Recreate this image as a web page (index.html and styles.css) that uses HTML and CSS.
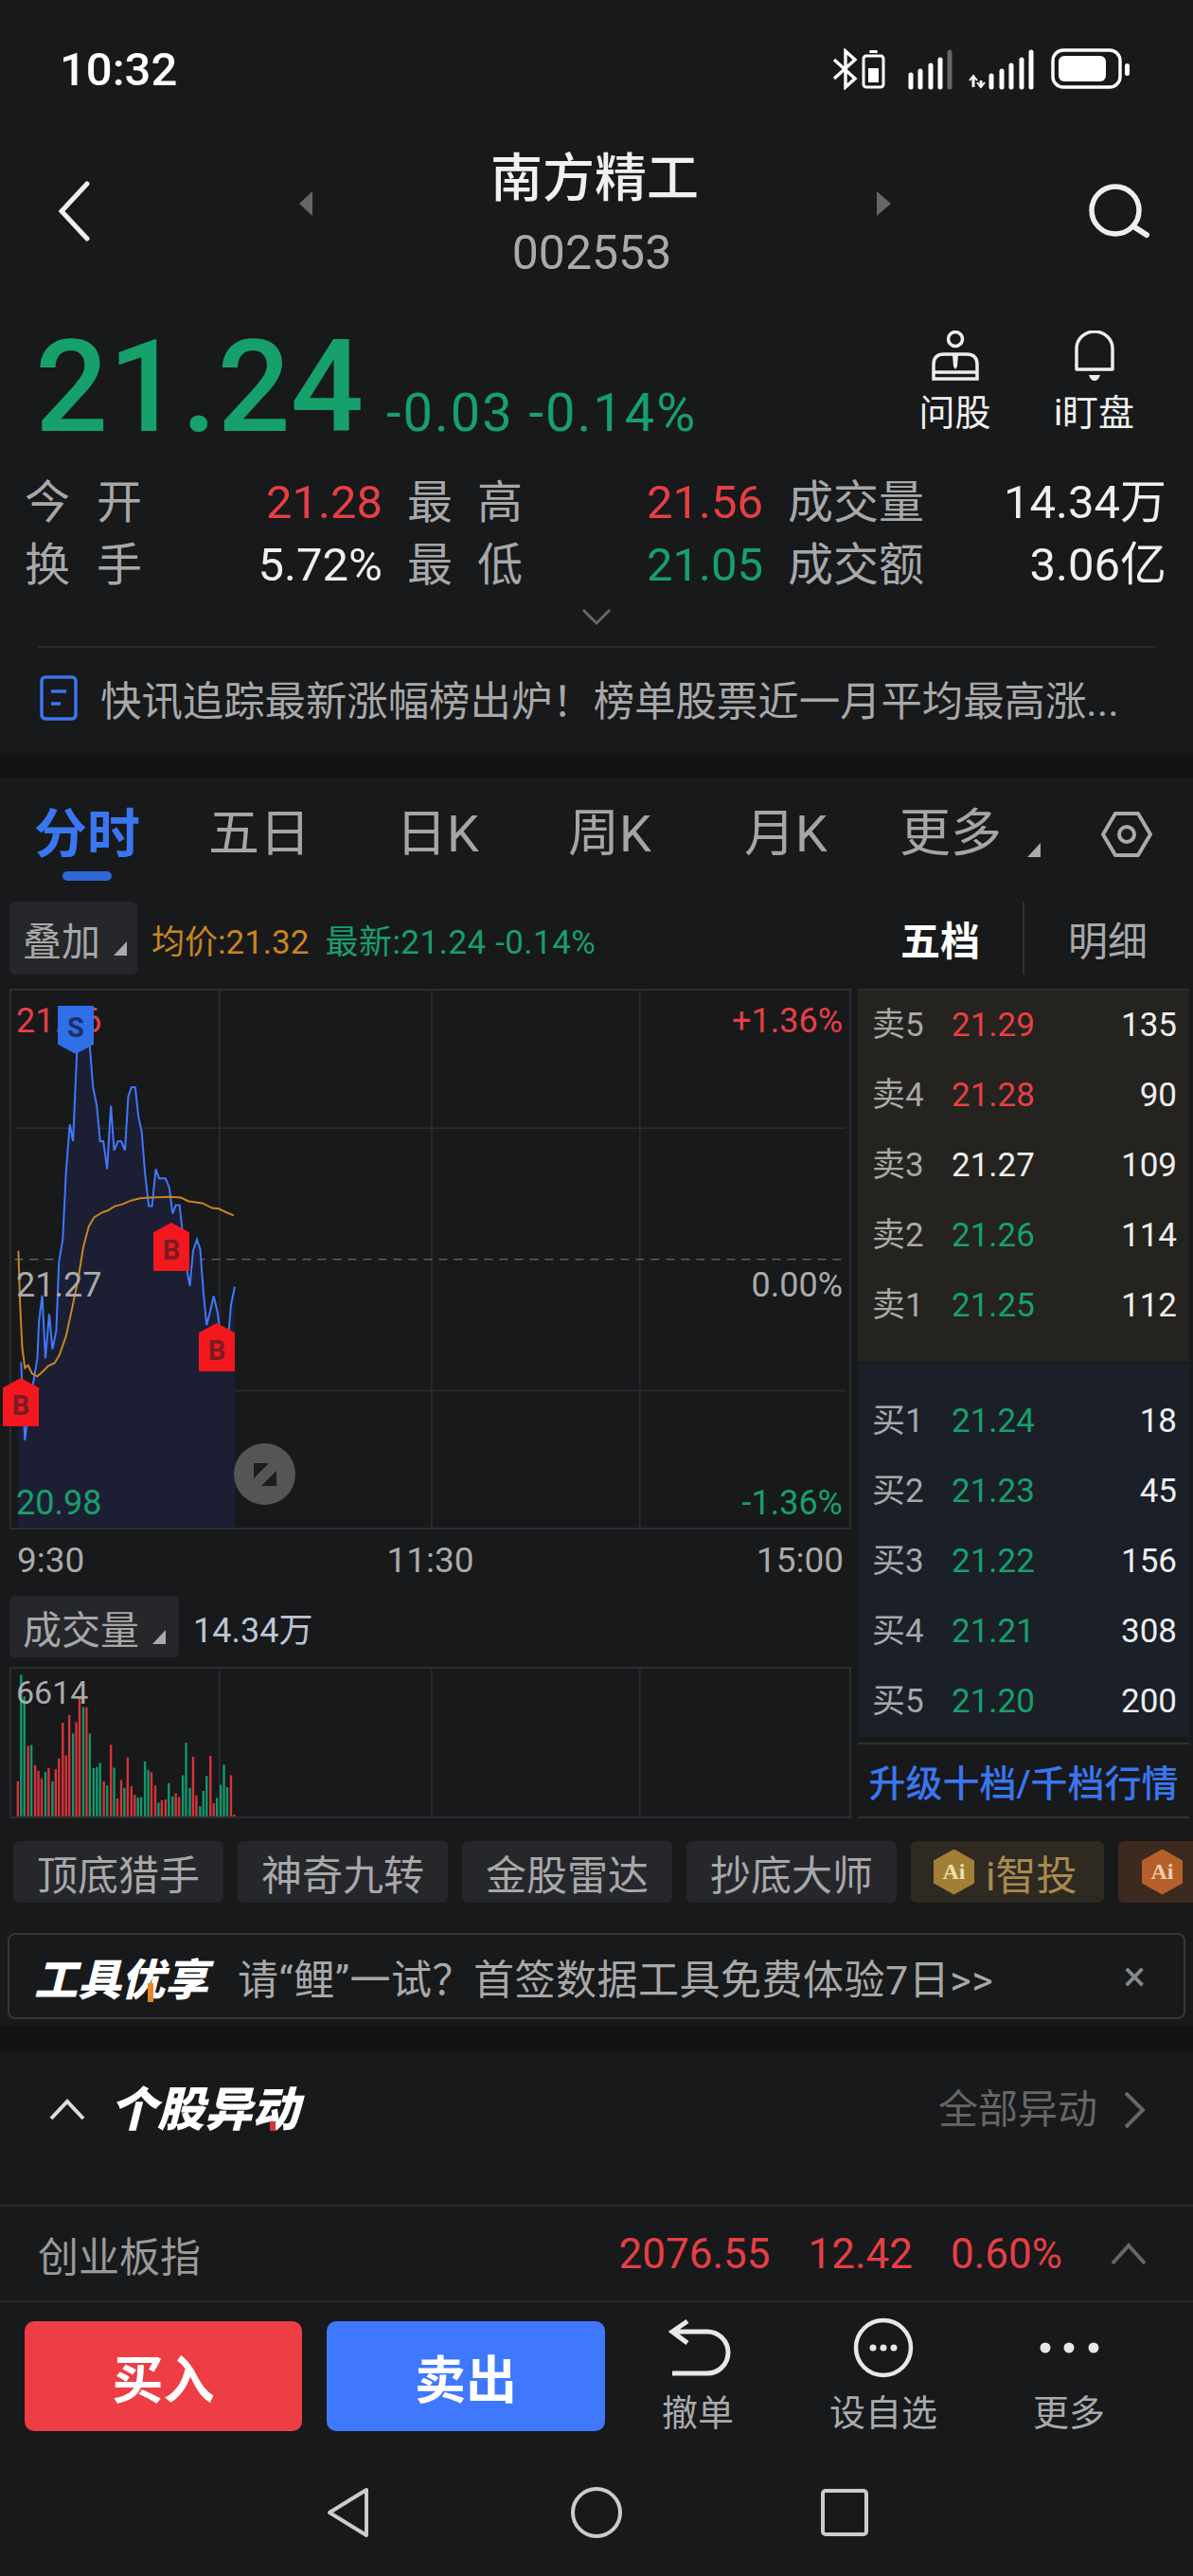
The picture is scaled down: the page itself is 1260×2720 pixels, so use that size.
FILE: index.html
```html
<!DOCTYPE html>
<html lang="zh">
<head>
    <meta charset="UTF-8">
    <meta name="viewport" content="width=device-width, initial-scale=1.0">
    <title>南方精工</title>
    <link rel="stylesheet" href="styles.css">
</head>
<body>
    <div class="status">
        <div class="time">10:32</div>
        <svg class="status_icons" viewBox="870 50 340 44" width="340" height="44">
            <path d="M881 62 L903 82 L893 91 V53 L903 62 L881 82" fill="none" stroke="#fff" stroke-width="3.4"/>
            <rect x="918" y="52" width="9" height="3" rx="1.5" fill="#fff"/>
            <rect x="912" y="58" width="21" height="33" rx="3" fill="none" stroke="#fff" stroke-width="3"/>
            <rect x="917" y="71" width="11" height="15" fill="#fff"/>
            <path d="M962 78V91M972 74V91M983 68V91M993 62V91" stroke="#fff" stroke-width="5" stroke-linecap="round"/>
            <path d="M1003 54V91" stroke="#666" stroke-width="5" stroke-linecap="round"/>
            <path d="M1028 81V91M1036 84V91" stroke="#fff" stroke-width="3"/>
            <path d="M1024 84l4-5 4 5M1032 86l4 5 4-5" fill="none" stroke="#fff" stroke-width="2"/>
            <path d="M1047 79V91M1058 74V91M1068 68V91M1079 62V91M1089 54V91" stroke="#fff" stroke-width="5" stroke-linecap="round"/>
            <rect x="1112" y="52" width="71" height="39" rx="11" fill="none" stroke="#fff" stroke-width="3.4"/>
            <rect x="1118" y="58" width="50" height="27" rx="6" fill="#fff"/>
            <rect x="1188" y="66" width="5" height="13" rx="2.5" fill="#fff"/>
        </svg>
    </div>

    <div class="header">
        <svg class="back" viewBox="0 0 36 64" width="36" height="64"><path d="M32 3 L5 32 L32 61" fill="none" stroke="#eee" stroke-width="5" stroke-linecap="round"/></svg>
        <div class="tri_left"></div>
        <div class="title_box">
            <div class="title">南方精工</div>
            <div class="code">002553</div>
        </div>
        <div class="tri_right"></div>
        <svg class="search" viewBox="0 0 66 60" width="66" height="60"><circle cx="29" cy="29" r="25" fill="none" stroke="#eee" stroke-width="5.5"/><path d="M48 46 L62 55" stroke="#eee" stroke-width="6" stroke-linecap="round"/></svg>
    </div>

    <div class="price_row">
        <div class="price">21.24</div>
        <div class="change">-0.03 -0.14%</div>
        <div class="quick">
            <div class="quick_item">
                <svg viewBox="0 0 52 54" width="52" height="54"><circle cx="26" cy="9" r="7.5" fill="none" stroke="#eee" stroke-width="3.5"/><path d="M3 51 V36 Q3 25 14 25 H38 Q49 25 49 36 V51 Z M3 44 H49" fill="none" stroke="#eee" stroke-width="3.5"/><path d="M23 26 H29 L28 38 L26 41 L24 38 Z" fill="#eee"/></svg>
                <span>问股</span>
            </div>
            <div class="quick_item">
                <svg viewBox="0 0 52 54" width="52" height="54"><path d="M7 41 V19 A19 18 0 0 1 45 19 V41 Z" fill="none" stroke="#eee" stroke-width="3.5" stroke-linejoin="round"/><path d="M20 47 H32 Q30 53 26 53 Q22 53 20 47 Z" fill="#eee"/></svg>
                <span>i盯盘</span>
            </div>
        </div>
    </div>

    <div class="stats">
        <div class="label pair"><span>今</span><span>开</span></div><div class="value red">21.28</div>
        <div class="label pair indent"><span>最</span><span>高</span></div><div class="value red">21.56</div>
        <div class="label indent">成交量</div><div class="value">14.34万</div>
        <div class="label pair"><span>换</span><span>手</span></div><div class="value">5.72%</div>
        <div class="label pair indent"><span>最</span><span>低</span></div><div class="value green">21.05</div>
        <div class="label indent">成交额</div><div class="value">3.06亿</div>
    </div>

    <div class="more_row">
        <svg viewBox="0 0 32 18" width="32" height="18"><path d="M2 2 L16 16 L30 2" fill="none" stroke="#666" stroke-width="3"/></svg>
    </div>

    <div class="news">
        <svg viewBox="0 0 40 48" width="40" height="48"><rect x="2" y="2" width="36" height="44" rx="4" fill="none" stroke="#3a76f0" stroke-width="3.5"/><path d="M12 17 H28 M12 30 H22" stroke="#3a76f0" stroke-width="3.5"/></svg>
        <span>快讯追踪最新涨幅榜出炉！榜单股票近一月平均最高涨...</span>
    </div>

    <div class="band"></div>

    <div class="tabs">
        <div class="tab active">分时</div>
        <div class="tab">五日</div>
        <div class="tab">日K</div>
        <div class="tab">周K</div>
        <div class="tab">月K</div>
        <div class="tab tab_more">更多<i class="corner"></i></div>
        <svg viewBox="0 0 54 50" width="54" height="50"><path d="M15 3 H39 L52 25 L39 47 H15 L2 25 Z" fill="none" stroke="#aaa" stroke-width="4" stroke-linejoin="round"/><circle cx="27" cy="25" r="8" fill="none" stroke="#aaa" stroke-width="4"/></svg>
    </div>

    <div class="toolbar">
        <div class="pick">叠加<i class="corner"></i></div>
        <div class="avg">均价:21.32</div>
        <div class="latest">最新:21.24 -0.14%</div>
        <div class="book_tabs">
            <div class="book_tab on">五档</div>
            <div class="book_tab">明细</div>
        </div>
    </div>

    <div class="main">
        <div class="charts">
            <div class="chart">
                <svg viewBox="17 60 1549 1445" preserveAspectRatio="none">
                    <path class="fine" d="M402 60V1505M794 60V1505M1179 60V1505M23 430H1560M23 1137H1560"/>
                    <path class="dash" d="M23 783H1560"/>
                    <path fill="#1c1f33" d="M30 1505V1050L35 1060 42 1270 50 1180 65 1050 68 950 74 880 80 1050 87 930 93 1025 100 975 105 790 112 730 118 550 125 420 131 465 138 230 145 130 155 130 162 210 168 320 175 370 181 465 187 465 194 540 201 370 207 490 214 465 220 465 227 490 233 345 239 320 246 320 252 400 258 440 264 550 271 640 277 640 284 540 290 565 302 565 309 590 315 660 321 637 328 637 334 720 340 800 347 855 353 760 360 730 366 755 372 870 378 960 385 920 391 882 398 925 404 990 416 1030 423 905 430 857V1505Z"/>
                    <path class="blue_line" d="M35 1060 42 1270 50 1180 65 1050 68 950 74 880 80 1050 87 930 93 1025 100 975 105 790 112 730 118 550 125 420 131 465 138 230 145 130 155 130 162 210 168 320 175 370 181 465 187 465 194 540 201 370 207 490 214 465 220 465 227 490 233 345 239 320 246 320 252 400 258 440 264 550 271 640 277 640 284 540 290 565 302 565 309 590 315 660 321 637 328 637 334 720 340 800 347 855 353 760 360 730 366 755 372 870 378 960 385 920 391 882 398 925 404 990 416 1030 423 905 430 857"/>
                    <path class="avg_line" d="M30 760 33 900 37 1020 42 1075 48 1068 55 1090 65 1098 75 1085 85 1070 97 1062 106 1040 118 990 130 910 140 840 150 750 160 695 170 670 185 657 195 652 208 640 222 635 238 625 255 619 275 617 310 615 330 617 345 627 370 632 388 645 400 647 415 657 428 665"/>
                </svg>
                <div class="tag_l red t1">21.56</div>
                <div class="tag_r red t1">+1.36%</div>
                <div class="tag_l t2">21.27</div>
                <div class="tag_r t2">0.00%</div>
                <div class="tag_l green t3">20.98</div>
                <div class="tag_r green t3">-1.36%</div>
                <div class="mark sell" style="left:49px;top:16px">S</div>
                <div class="mark buy" style="left:150px;top:245px">B</div>
                <div class="mark buy" style="left:198px;top:351px">B</div>
                <div class="mark buy" style="left:-9px;top:409px">B</div>
                <div class="mini">
                    <svg viewBox="0 0 30 30" width="30" height="30"><path d="M3 3 H19 L3 19 Z M27 27 H11 L27 11 Z" fill="#1c1d1f"/></svg>
                </div>
            </div>
            <div class="axis"><span>9:30</span><span>11:30</span><span class="axis_end">15:00</span></div>
            <div class="vol_head">
                <div class="pick small">成交量<i class="corner"></i></div>
                <div class="vol_num">14.34万</div>
            </div>
            <div class="chart vol">
                <svg viewBox="17 360 1549 478" preserveAspectRatio="none">
                    <path class="fine" d="M402 360V838M794 360V838M1179 360V838"/>
                    <path class="bar_r" d="M29 725V838M48 610V838M61 672V838M67 690V838M73 715V838M86 682V838M99 685V838M105 650V838M112 535V838M118 640V838M124 510V838M137 533V838M143 455V838M156 485V838M188 725V838M201 606V838M213 780V838M220 720V838M232 647V838M239 740V838M245 768V838M276 695V838M283 738V838M295 785V838M302 783V838M321 763V838M327 775V838M353 645V838M359 770V838M385 642V838M391 795V838M423 705V838M429 832V838"/>
                    <path class="bar_g" d="M35 380V838M41 450V838M54 607V838M80 695V838M93 725V838M131 570V838M150 483V838M162 570V838M169 682V838M175 678V838M181 665V838M194 738V838M207 680V838M226 745V838M251 777V838M257 775V838M264 660V838M270 687V838M289 793V838M308 730V838M315 773V838M334 705V838M340 600V838M347 745V838M366 805V838M372 755V838M378 707V838M397 778V838M404 735V838M410 670V838M416 743V838"/>
                </svg>
                <div class="tag_l t4">6614</div>
            </div>
        </div>

        <div class="book">
            <div class="side ask">
                <div class="level"><span class="lv">卖5</span><span class="red">21.29</span><span class="qty">135</span></div>
                <div class="level"><span class="lv">卖4</span><span class="red">21.28</span><span class="qty">90</span></div>
                <div class="level"><span class="lv">卖3</span><span class="white">21.27</span><span class="qty">109</span></div>
                <div class="level"><span class="lv">卖2</span><span class="green">21.26</span><span class="qty">114</span></div>
                <div class="level"><span class="lv">卖1</span><span class="green">21.25</span><span class="qty">112</span></div>
            </div>
            <div class="side bid">
                <div class="level"><span class="lv">买1</span><span class="green">21.24</span><span class="qty">18</span></div>
                <div class="level"><span class="lv">买2</span><span class="green">21.23</span><span class="qty">45</span></div>
                <div class="level"><span class="lv">买3</span><span class="green">21.22</span><span class="qty">156</span></div>
                <div class="level"><span class="lv">买4</span><span class="green">21.21</span><span class="qty">308</span></div>
                <div class="level"><span class="lv">买5</span><span class="green">21.20</span><span class="qty">200</span></div>
            </div>
            <div class="upgrade">升级十档/千档行情</div>
        </div>
    </div>

    <div class="tools">
        <div class="tool">顶底猎手</div>
        <div class="tool">神奇九转</div>
        <div class="tool">金股雷达</div>
        <div class="tool">抄底大师</div>
        <div class="tool ai"><i class="hex">Ai</i>i智投</div>
        <div class="tool ai2"><i class="hex">Ai</i></div>
    </div>

    <div class="banner">
        <div class="banner_logo">工具优享<i class="spark"></i></div>
        <div class="banner_text">请“鲤”一试？首签数据工具免费体验7日&gt;&gt;</div>
        <div class="banner_close">×</div>
    </div>

    <div class="band low"></div>

    <div class="section">
        <svg viewBox="0 0 40 24" width="40" height="24"><path d="M3 21 L20 3 L37 21" fill="none" stroke="#ddd" stroke-width="4"/></svg>
        <div class="section_title">个股异动<i class="spark red_spark"></i></div>
        <div class="section_all">全部异动</div>
        <svg viewBox="0 0 24 40" width="24" height="40"><path d="M3 2 L21 20 L3 38" fill="none" stroke="#666" stroke-width="4"/></svg>
    </div>

    <div class="index_row">
        <div class="index_name">创业板指</div>
        <div class="index_num n1">2076.55</div>
        <div class="index_num n2">12.42</div>
        <div class="index_num n3">0.60%</div>
        <svg viewBox="0 0 40 24" width="40" height="24"><path d="M3 22 L20 3 L37 22" fill="none" stroke="#666" stroke-width="4"/></svg>
    </div>

    <div class="trade">
        <div class="trade_btn buy_btn">买入</div>
        <div class="trade_btn sell_btn">卖出</div>
        <div class="trade_item">
            <svg viewBox="0 0 72 64" width="72" height="64"><path d="M25 4 L9 15 L25 27 M9 15 H46 A22 22 0 0 1 46 59 H9" fill="none" stroke="#e8e8e8" stroke-width="5"/></svg>
            <span>撤单</span>
        </div>
        <div class="trade_item">
            <svg viewBox="0 0 72 64" width="72" height="64"><circle cx="36" cy="32" r="29" fill="none" stroke="#e8e8e8" stroke-width="4.5"/><circle cx="25" cy="32" r="3.5" fill="#e8e8e8"/><circle cx="36" cy="32" r="3.5" fill="#e8e8e8"/><circle cx="47" cy="32" r="3.5" fill="#e8e8e8"/></svg>
            <span>设自选</span>
        </div>
        <div class="trade_item">
            <svg viewBox="0 0 72 64" width="72" height="64"><circle cx="11" cy="32" r="5.5" fill="#e8e8e8"/><circle cx="36" cy="32" r="5.5" fill="#e8e8e8"/><circle cx="62" cy="32" r="5.5" fill="#e8e8e8"/></svg>
            <span>更多</span>
        </div>
    </div>

    <div class="nav">
        <svg viewBox="0 0 46 54" width="46" height="54"><path d="M42 3 V51 L3 27 Z" fill="none" stroke="#ccc" stroke-width="4" stroke-linejoin="round"/></svg>
        <svg viewBox="0 0 54 54" width="54" height="54"><circle cx="27" cy="27" r="25" fill="none" stroke="#ccc" stroke-width="4"/></svg>
        <svg viewBox="0 0 50 50" width="50" height="50"><rect x="2" y="2" width="46" height="46" rx="3" fill="none" stroke="#ccc" stroke-width="4"/></svg>
    </div>
</body>
</html>
```

FILE: styles.css
```css
* {
    box-sizing: border-box;
}
body {
    margin: 0;
    width: 1260px;
    height: 2720px;
    overflow: hidden;
    background: #17191b;
    color: #f0f0f0;
    font-family: Roboto, "Noto Sans CJK SC", sans-serif;
}
i {
    font-style: normal;
}
svg {
    display: block;
    flex: none;
}
.red { color: #e63f45; }
.green { color: #16a06c; }
.white { color: #eee; }

/* status bar */
.status {
    height: 146px;
    display: flex;
    align-items: center;
    justify-content: space-between;
    padding: 0 50px 0 63px;
}
.time {
    font-size: 49px;
    font-weight: 500;
    color: #fff;
}

/* header */
.header {
    height: 154px;
    display: grid;
    grid-template-columns: 256px 14px 596px 15px 1fr;
    align-items: center;
    padding: 0 45px 0 60px;
}
.tri_left, .tri_right {
    height: 26px;
    margin-bottom: 16px;
    background: #666;
}
.tri_left { clip-path: polygon(100% 0, 100% 100%, 0 50%); }
.tri_right { clip-path: polygon(0 0, 100% 50%, 0 100%); }
.title_box {
    text-align: center;
    align-self: start;
    padding-top: 12px;
}
.title {
    font-size: 55px;
    line-height: 60px;
    font-weight: 500;
}
.code {
    font-size: 50px;
    line-height: 50px;
    margin-top: 24px;
    color: #aaa;
    margin-right: 6px;
}
.search {
    justify-self: end;
}

/* price */
.price_row {
    display: flex;
    align-items: baseline;
    padding: 41px 31px 0 37px;
    height: 177px;
}
.price {
    font-size: 136px;
    line-height: 136px;
    font-weight: 500;
    color: #16a06c;
}
.change {
    font-size: 56px;
    letter-spacing: 2px;
    margin-left: 24px;
    color: #16a06c;
}
.quick {
    margin-left: auto;
    display: flex;
    align-self: flex-start;
    padding-top: 8px;
}
.quick_item {
    width: 147px;
    display: flex;
    flex-direction: column;
    align-items: center;
    font-size: 38px;
    line-height: 40px;
}
.quick_item span {
    margin-top: 13px;
}

/* stats */
.stats {
    margin-top: 21px;
    padding-left: 26px;
    display: grid;
    grid-template-columns: 124px 254px 148px 254px 171px 255px;
    grid-auto-rows: 66px;
    font-size: 48px;
    line-height: 66px;
    align-items: baseline;
}
.label {
    color: #a8a8a8;
}
.pair {
    display: flex;
    justify-content: space-between;
}
.indent {
    padding-left: 26px;
}
.value {
    text-align: right;
    font-size: 49px;
}
.more_row {
    height: 54px;
    margin: 0 40px;
    padding-top: 12px;
    display: flex;
    justify-content: center;
    align-items: flex-start;
    border-bottom: 2px solid #292b2d;
}
.news {
    height: 111px;
    display: flex;
    align-items: center;
    padding: 0 0 6px 42px;
    font-size: 43.4px;
    color: #a8a8a8;
}
.news span {
    margin-left: 24px;
    white-space: nowrap;
}
.band {
    height: 26px;
    background: #111315;
}

/* tabs */
.tabs {
    height: 118px;
    padding-left: 36px;
    display: grid;
    grid-template-columns: 184px 198px 182px 186px 164px 213px 1fr;
    align-items: center;
    font-size: 54px;
    line-height: 60px;
    padding-top: 2px;
    color: #a5a5a5;
}
.tab {
    position: relative;
    white-space: nowrap;
}
.active {
    color: #3a76f0;
    font-weight: 700;
    font-size: 56px;
}
.active::after {
    content: "";
    position: absolute;
    left: 30px;
    bottom: -19px;
    width: 52px;
    height: 10px;
    border-radius: 5px;
    background: #2f66d6;
}
.tab_more {
    display: flex;
    align-items: flex-end;
}
.corner {
    width: 14px;
    height: 15px;
    background: #aaa;
    clip-path: polygon(100% 0, 100% 100%, 0 100%);
    flex: none;
    margin: 0 0 6px 27px;
}

/* toolbar */
.toolbar {
    height: 105px;
    padding: 13px 0 15px 10px;
    display: flex;
    align-items: center;
}
.pick {
    width: 135px;
    height: 77px;
    display: flex;
    align-items: center;
    padding-left: 14px;
    background: #25272b;
    border-radius: 6px;
    font-size: 41px;
    color: #a8a8a8;
}
.pick .corner {
    margin: 22px 0 0 14px;
}
.avg, .latest {
    font-size: 35px;
    white-space: nowrap;
    padding-top: 2px;
}
.avg {
    color: #c8861e;
    margin-left: 15px;
}
.latest {
    color: #16a06c;
    margin-left: 17px;
    letter-spacing: 0.5px;
}
.book_tabs {
    margin-left: auto;
    display: flex;
    align-self: stretch;
    align-items: center;
    font-size: 42px;
    color: #a8a8a8;
}
.book_tab {
    width: 178px;
    padding-left: 46px;
}
.book_tab.on {
    width: 131px;
    padding-left: 0;
    color: #fff;
    font-weight: 700;
    border-right: 2px solid #2e3033;
    align-self: stretch;
    display: flex;
    align-items: center;
}

/* charts */
.main {
    display: flex;
    gap: 7px;
    padding-left: 10px;
    height: 876px;
}
.charts {
    width: 889px;
}
.chart {
    position: relative;
    height: 571px;
    border: 2px solid #2b2d30;
}
.chart svg {
    width: 100%;
    height: 100%;
}
.chart path {
    vector-effect: non-scaling-stroke;
}
.fine {
    stroke: #2b2d30;
    stroke-width: 1.5;
    fill: none;
}
.dash {
    stroke: #5a5c60;
    stroke-width: 1.5;
    stroke-dasharray: 9 7;
    fill: none;
}
.blue_line {
    stroke: #3f78fd;
    stroke-width: 2;
    fill: none;
}
.avg_line {
    stroke: #c8861e;
    stroke-width: 2;
    fill: none;
}
.bar_r, .bar_g {
    stroke-width: 2.4;
    fill: none;
}
.bar_r { stroke: #d7333a; }
.bar_g { stroke: #13976a; }
.tag_l, .tag_r {
    position: absolute;
    font-size: 36px;
    line-height: 36px;
    color: #aaa;
}
.tag_l.red, .tag_r.red { color: #e63f45; }
.tag_l.green, .tag_r.green { color: #16a06c; }
.tag_l { left: 5px; }
.tag_r { right: 7px; }
.t1 { top: 14px; }
.t2 { top: 293px; }
.t3 { top: 523px; }
.t4 { top: 7px; font-size: 34px; }
.mark {
    position: absolute;
    width: 38px;
    height: 51px;
    display: flex;
    align-items: center;
    justify-content: center;
    font-size: 29px;
    font-weight: 700;
}
.mark.buy {
    background: #f3171e;
    color: #7a1c24;
    clip-path: polygon(50% 0, 100% 20%, 100% 100%, 0 100%, 0 20%);
    padding-top: 6px;
}
.mark.sell {
    background: #2f6fe8;
    color: #1c2f66;
    clip-path: polygon(0 0, 100% 0, 100% 80%, 50% 100%, 0 80%);
    padding-bottom: 6px;
}
.mini {
    position: absolute;
    left: 235px;
    top: 478px;
    width: 65px;
    height: 65px;
    border-radius: 50%;
    background: #555;
    display: flex;
    align-items: center;
    justify-content: center;
}
.mini svg {
    width: 30px;
    height: 30px;
}
.axis {
    height: 70px;
    padding: 0 8px 6px;
    display: grid;
    grid-template-columns: 1fr auto 1fr;
    align-items: center;
    font-size: 37px;
    color: #aaa;
}
.axis_end {
    text-align: right;
}
.vol_head {
    height: 75px;
    padding-bottom: 10px;
    display: flex;
    align-items: center;
}
.pick.small {
    width: 179px;
    height: 65px;
}
.vol_num {
    margin-left: 15px;
    font-size: 36px;
    color: #bcc4d6;
}
.chart.vol {
    height: 160px;
}

/* order book */
.book {
    width: 350px;
    height: 876px;
}
.side {
    height: 394px;
    font-size: 35px;
}
.ask {
    background: #24231f;
    border-top: 2px solid #2e2e2c;
}
.bid {
    margin-top: 2px;
    padding-top: 24px;
    background: #1a1f28;
}
.level {
    height: 74px;
    display: grid;
    grid-template-columns: 84px 1fr auto;
    align-items: baseline;
    line-height: 74px;
    padding: 0 13px 0 15px;
}
.lv {
    color: #a8a8a8;
}
.qty {
    color: #eee;
}
.upgrade {
    margin-top: 6px;
    height: 80px;
    display: flex;
    align-items: center;
    justify-content: center;
    border-top: 2px solid #2e3033;
    border-bottom: 2px solid #2e3033;
    font-size: 39px;
    font-weight: 500;
    color: #3a76f0;
    white-space: nowrap;
}

/* tool tags */
.tools {
    display: flex;
    gap: 15px;
    padding: 24px 0 0 14px;
    overflow: hidden;
}
.tool {
    flex: none;
    width: 222px;
    height: 65px;
    display: flex;
    align-items: center;
    justify-content: center;
    background: #25272b;
    border-radius: 6px;
    font-size: 43px;
    color: #a8a8a8;
}
.tool.ai {
    width: 204px;
    background: #2e2a22;
    color: #a98a50;
    justify-content: flex-start;
    padding-left: 24px;
}
.tool.ai2 {
    width: 120px;
    background: #3d2a1e;
    justify-content: flex-start;
    padding-left: 25px;
}
.hex {
    width: 43px;
    height: 48px;
    margin-right: 12px;
    flex: none;
    display: flex;
    align-items: center;
    justify-content: center;
    background: #a27f35;
    clip-path: polygon(50% 0, 100% 25%, 100% 75%, 50% 100%, 0 75%, 0 25%);
    font-family: "Liberation Serif", serif;
    font-size: 24px;
    font-weight: 700;
    color: #f0dfb0;
}
.ai2 .hex {
    background: #b5602a;
    color: #f2d0b0;
}

/* banner */
.banner {
    margin: 32px 8px 0;
    height: 91px;
    display: flex;
    align-items: center;
    padding: 0 40px 0 26px;
    border: 2px solid #35373a;
    border-radius: 8px;
}
.banner_logo {
    position: relative;
    font-size: 46px;
    font-weight: 900;
    font-style: italic;
    color: #fff;
    white-space: nowrap;
}
.spark {
    position: absolute;
    left: 120px;
    bottom: 6px;
    width: 6px;
    height: 20px;
    background: #e8872a;
}
.banner_text {
    margin-left: 31px;
    font-size: 43px;
    letter-spacing: 0.5px;
    color: #a8a8a8;
    white-space: nowrap;
}
.banner_close {
    margin-left: auto;
    font-size: 44px;
    color: #888;
}
.band.low {
    margin-top: 8px;
}

/* sections */
.section {
    height: 164px;
    padding: 35px 50px 0 51px;
    display: flex;
    align-items: flex-start;
    border-bottom: 2px solid #26282a;
}
.section > svg {
    margin-top: 15px;
}
.section > svg:last-child {
    margin-top: 7px;
    margin-left: 27px;
}
.section_title {
    position: relative;
    margin-left: 25px;
    font-size: 50px;
    line-height: 54px;
    font-weight: 900;
    font-style: italic;
    color: #fff;
}
.red_spark {
    left: 169px;
    bottom: 5px;
    height: 10px;
    background: #d7333a;
}
.section_all {
    margin-left: auto;
    font-size: 42px;
    line-height: 54px;
    color: #666;
}
.index_row {
    height: 101px;
    padding: 0 48px 0 40px;
    display: flex;
    align-items: center;
    border-bottom: 2px solid #26282a;
}
.index_name {
    font-size: 43px;
    color: #999;
    margin-right: auto;
}
.index_num {
    font-size: 44px;
    color: #e63f45;
}
.n2 { margin-left: 40px; }
.n3 { margin-left: 40px; }
.index_row svg {
    margin-left: 50px;
}

/* bottom trade bar */
.trade {
    height: 135px;
    padding: 20px 0 0 26px;
    display: flex;
    align-items: flex-start;
}
.trade_btn {
    width: 293px;
    height: 116px;
    display: flex;
    align-items: center;
    justify-content: center;
    border-radius: 10px;
    font-size: 54px;
    font-weight: 700;
    color: #fff;
}
.buy_btn { background: #ee3e45; }
.sell_btn {
    background: #3f78fd;
    margin-left: 26px;
    width: 294px;
}
.trade_item {
    width: 196px;
    margin-top: -4px;
    display: flex;
    flex-direction: column;
    align-items: center;
    font-size: 38px;
    line-height: 40px;
    color: #aaa;
}
.trade_item span {
    margin-top: 17px;
}
.nav {
    padding-top: 60px;
    display: grid;
    grid-template-columns: repeat(3, 262px);
    justify-content: center;
    justify-items: center;
    align-items: center;
}
```
